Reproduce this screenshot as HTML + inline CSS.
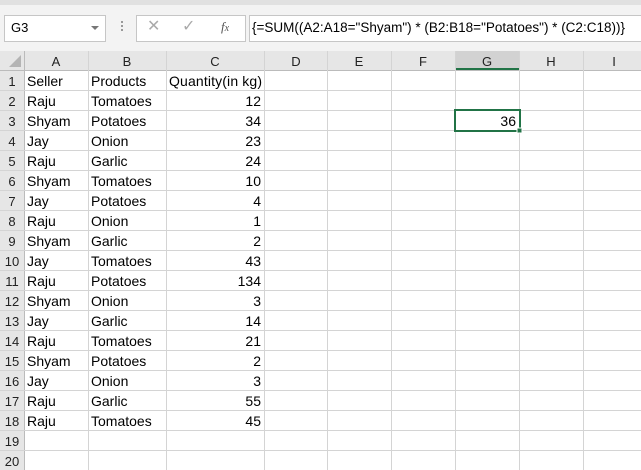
<!DOCTYPE html>
<html><head><style>
body{margin:0;width:641px;height:470px;overflow:hidden;background:#fff;font-family:"Liberation Sans",Arial,sans-serif;position:relative}
.a{position:absolute}
.t{position:absolute;font-size:13px;line-height:20px;color:#000;white-space:nowrap}
</style></head><body>
<div class="a" style="left:0;top:0;width:641px;height:5px;background:#e1e1e1"></div>
<div class="a" style="left:0;top:5px;width:641px;height:46px;background:#f3f3f3"></div>
<div class="a" style="left:4px;top:15px;width:100px;height:25px;background:#fff;border:1px solid #c6c6c6"></div>
<div class="t" style="left:11px;top:18px;font-size:13px">G3</div>
<div class="a" style="left:91px;top:26px;width:0;height:0;border-left:4px solid transparent;border-right:4px solid transparent;border-top:4px solid #777"></div>
<div class="a" style="left:121px;top:21px;width:2px;height:12px;background:repeating-linear-gradient(#999 0 2px,transparent 2px 4px)"></div>
<div class="a" style="left:136px;top:15px;width:108px;height:25px;background:#fff;border:1px solid #c6c6c6"></div>
<div class="t" style="left:147px;top:17px;font-size:16px;color:#aaa">✕</div>
<div class="t" style="left:182px;top:17px;font-size:16px;color:#aaa">✓</div>
<div class="t" style="left:221px;top:17px;font-size:13px;font-style:italic;font-family:'Liberation Serif',serif;color:#555">f<span style="font-size:10px">x</span></div>
<div class="a" style="left:249px;top:15px;width:392px;height:25px;background:#fff;border:1px solid #c6c6c6;border-right:none"></div>
<div class="t" style="left:252px;top:18px;font-size:13.5px">{=SUM((A2:A18="Shyam") * (B2:B18="Potatoes") * (C2:C18))}</div>
<svg class="a" style="left:0;top:51px" width="641" height="419">
<rect x="0" y="0" width="641" height="19" fill="#e6e6e6"/>
<rect x="0" y="0" width="24" height="419" fill="#e6e6e6"/>
<rect x="455" y="0" width="65" height="19" fill="#d2d2d2"/>
<rect x="455" y="17" width="65" height="2" fill="#217346"/>
<polygon points="9,16 21,16 21,4" fill="#b4b4b4"/>
<g stroke="#d4d4d4" stroke-width="1">
<line x1="24.5" y1="0" x2="24.5" y2="419" stroke="#bbb"/>
<line x1="0" y1="19.5" x2="641" y2="19.5" stroke="#bbb"/>
<line x1="88.5" y1="0" x2="88.5" y2="419"/>
<line x1="166.5" y1="0" x2="166.5" y2="419"/>
<line x1="264.5" y1="0" x2="264.5" y2="419"/>
<line x1="327.5" y1="0" x2="327.5" y2="419"/>
<line x1="391.5" y1="0" x2="391.5" y2="419"/>
<line x1="455.5" y1="0" x2="455.5" y2="419"/>
<line x1="519.5" y1="0" x2="519.5" y2="419"/>
<line x1="583.5" y1="0" x2="583.5" y2="419"/>
<line x1="0" y1="39.5" x2="641" y2="39.5"/><line x1="0" y1="59.5" x2="641" y2="59.5"/><line x1="0" y1="79.5" x2="641" y2="79.5"/><line x1="0" y1="99.5" x2="641" y2="99.5"/><line x1="0" y1="119.5" x2="641" y2="119.5"/><line x1="0" y1="139.5" x2="641" y2="139.5"/><line x1="0" y1="159.5" x2="641" y2="159.5"/><line x1="0" y1="179.5" x2="641" y2="179.5"/><line x1="0" y1="199.5" x2="641" y2="199.5"/><line x1="0" y1="219.5" x2="641" y2="219.5"/><line x1="0" y1="239.5" x2="641" y2="239.5"/><line x1="0" y1="259.5" x2="641" y2="259.5"/><line x1="0" y1="279.5" x2="641" y2="279.5"/><line x1="0" y1="299.5" x2="641" y2="299.5"/><line x1="0" y1="319.5" x2="641" y2="319.5"/><line x1="0" y1="339.5" x2="641" y2="339.5"/><line x1="0" y1="359.5" x2="641" y2="359.5"/><line x1="0" y1="379.5" x2="641" y2="379.5"/><line x1="0" y1="399.5" x2="641" y2="399.5"/>
</g>
<rect x="455" y="59" width="65" height="21" fill="none" stroke="#217346" stroke-width="2"/>
<rect x="517" y="77" width="5" height="5" fill="#217346" stroke="#fff" stroke-width="1"/>
<g font-family="Liberation Sans,Arial,sans-serif" font-size="13" fill="#222" text-anchor="middle">
<text x="56" y="15">A</text><text x="127" y="15">B</text><text x="215" y="15">C</text><text x="296" y="15">D</text><text x="359" y="15">E</text><text x="423" y="15">F</text><text x="487" y="15">G</text><text x="551" y="15">H</text><text x="614" y="15">I</text>
<text x="12" y="35">1</text><text x="12" y="55">2</text><text x="12" y="75">3</text><text x="12" y="95">4</text><text x="12" y="115">5</text><text x="12" y="135">6</text><text x="12" y="155">7</text><text x="12" y="175">8</text><text x="12" y="195">9</text><text x="12" y="215">10</text><text x="12" y="235">11</text><text x="12" y="255">12</text><text x="12" y="275">13</text><text x="12" y="295">14</text><text x="12" y="315">15</text><text x="12" y="335">16</text><text x="12" y="355">17</text><text x="12" y="375">18</text><text x="12" y="395">19</text><text x="12" y="415">20</text>
</g>
<g font-family="Liberation Sans,Arial,sans-serif" font-size="14" fill="#000">
<text x="27" y="35">Seller</text><text x="91" y="35">Products</text><text x="169" y="35" textLength="93">Quantity(in kg)</text>
<text x="27" y="55">Raju</text><text x="91" y="55">Tomatoes</text>
<text x="27" y="75">Shyam</text><text x="91" y="75">Potatoes</text>
<text x="27" y="95">Jay</text><text x="91" y="95">Onion</text>
<text x="27" y="115">Raju</text><text x="91" y="115">Garlic</text>
<text x="27" y="135">Shyam</text><text x="91" y="135">Tomatoes</text>
<text x="27" y="155">Jay</text><text x="91" y="155">Potatoes</text>
<text x="27" y="175">Raju</text><text x="91" y="175">Onion</text>
<text x="27" y="195">Shyam</text><text x="91" y="195">Garlic</text>
<text x="27" y="215">Jay</text><text x="91" y="215">Tomatoes</text>
<text x="27" y="235">Raju</text><text x="91" y="235">Potatoes</text>
<text x="27" y="255">Shyam</text><text x="91" y="255">Onion</text>
<text x="27" y="275">Jay</text><text x="91" y="275">Garlic</text>
<text x="27" y="295">Raju</text><text x="91" y="295">Tomatoes</text>
<text x="27" y="315">Shyam</text><text x="91" y="315">Potatoes</text>
<text x="27" y="335">Jay</text><text x="91" y="335">Onion</text>
<text x="27" y="355">Raju</text><text x="91" y="355">Garlic</text>
<text x="27" y="375">Raju</text><text x="91" y="375">Tomatoes</text>
</g>
<g font-family="Liberation Sans,Arial,sans-serif" font-size="14" fill="#000" text-anchor="end">
<text x="261" y="55">12</text><text x="261" y="75">34</text><text x="261" y="95">23</text><text x="261" y="115">24</text><text x="261" y="135">10</text><text x="261" y="155">4</text><text x="261" y="175">1</text><text x="261" y="195">2</text><text x="261" y="215">43</text><text x="261" y="235">134</text><text x="261" y="255">3</text><text x="261" y="275">14</text><text x="261" y="295">21</text><text x="261" y="315">2</text><text x="261" y="335">3</text><text x="261" y="355">55</text><text x="261" y="375">45</text>
<text x="516" y="75">36</text>
</g>
</svg>
</body></html>
